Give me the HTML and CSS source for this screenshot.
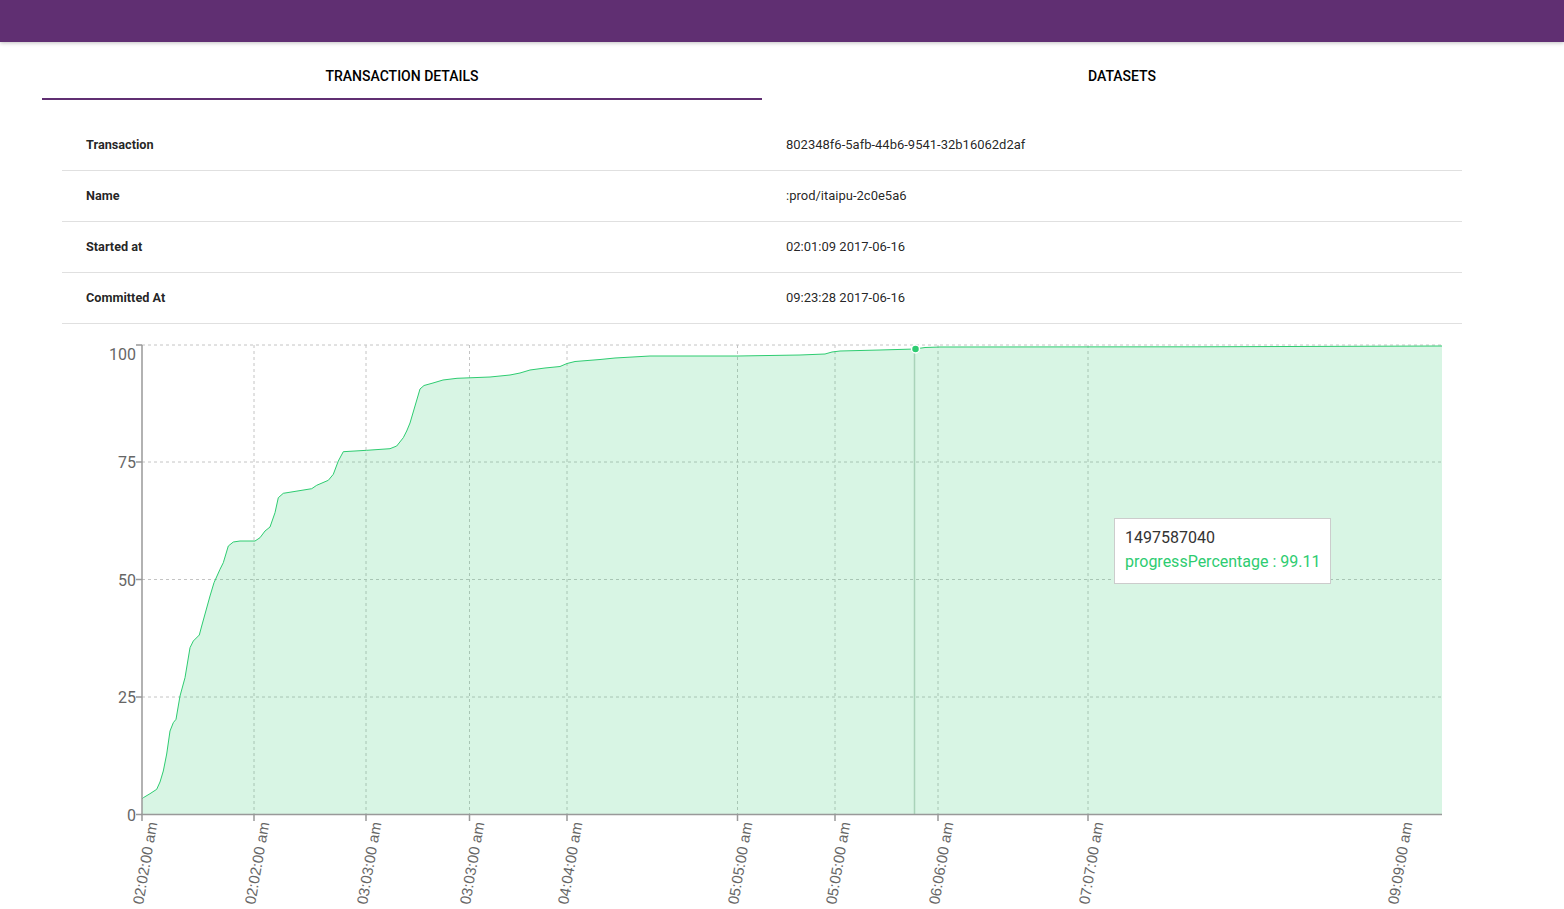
FILE: index.html
```html
<!DOCTYPE html>
<html lang="en">
<head>
<meta charset="utf-8">
<title>Transaction Details</title>
<link rel="stylesheet" href="styles.css">
</head>
<body>
<header class="appbar"></header>
<main class="content">
  <nav class="tabs">
    <div class="tab tab-active">TRANSACTION DETAILS</div>
    <div class="tab">DATASETS</div>
  </nav>
  <table class="details">
    <tbody>
      <tr><th>Transaction</th><td>802348f6-5afb-44b6-9541-32b16062d2af</td></tr>
      <tr><th>Name</th><td>:prod/itaipu-2c0e5a6</td></tr>
      <tr><th>Started at</th><td>02:01:09 2017-06-16</td></tr>
      <tr><th>Committed At</th><td>09:23:28 2017-06-16</td></tr>
    </tbody>
  </table>
  <div class="chart">
    <svg class="chart-svg" width="1440" height="586" viewBox="0 0 1440 586">
      <g transform="translate(-42,-323)">
        <g class="grid">
          <line x1="142" y1="344" x2="1442" y2="344"/>
          <line x1="142" y1="461" x2="1442" y2="461"/>
          <line x1="142" y1="578.5" x2="1442" y2="578.5"/>
          <line x1="142" y1="696" x2="1442" y2="696"/>
          <line x1="254" y1="344" x2="254" y2="813"/>
          <line x1="366" y1="344" x2="366" y2="813"/>
          <line x1="469.5" y1="344" x2="469.5" y2="813"/>
          <line x1="567" y1="344" x2="567" y2="813"/>
          <line x1="737.5" y1="344" x2="737.5" y2="813"/>
          <line x1="835" y1="344" x2="835" y2="813"/>
          <line x1="938" y1="344" x2="938" y2="813"/>
          <line x1="1088" y1="344" x2="1088" y2="813"/>
        </g>
        <path class="area" d="M142,798 L143.3,796.7 L150,792.7 L156.7,788.3 L160,781 L163.3,770 L166.7,753 L170,730 L173.3,721.7 L176,718.3 L180,695 L185,676.7 L190,646.7 L193.3,640 L199.3,634 L201.7,625 L210,595 L214,581.7 L220,568.3 L223.3,561.7 L228.3,545 L233.3,541 L240,540 L255,540 L260,536.7 L265,530 L270,526 L275,511.7 L278.3,496.7 L283.3,492.3 L311.7,487.7 L316.7,484.3 L328.3,479.3 L333.3,473.3 L338.3,460 L343.3,450.7 L366.7,449.3 L390,447.7 L396.7,445 L403.3,436.7 L406.7,430 L410,422 L415,405 L420,388 L424,384.5 L433,382 L443,379 L457,377.3 L490,376 L510,374 L520,372 L530,369 L545,367 L560,365.5 L567,362.5 L575,360.5 L600,358.5 L615,357 L650,355 L738,355 L800,354 L825,353 L832,351 L840,350 L880,349 L915,348 L925,346.5 L940,346 L1200,345.8 L1442,345 L1442,813 L142,813 Z"/>
        <path class="line" d="M142,798 L143.3,796.7 L150,792.7 L156.7,788.3 L160,781 L163.3,770 L166.7,753 L170,730 L173.3,721.7 L176,718.3 L180,695 L185,676.7 L190,646.7 L193.3,640 L199.3,634 L201.7,625 L210,595 L214,581.7 L220,568.3 L223.3,561.7 L228.3,545 L233.3,541 L240,540 L255,540 L260,536.7 L265,530 L270,526 L275,511.7 L278.3,496.7 L283.3,492.3 L311.7,487.7 L316.7,484.3 L328.3,479.3 L333.3,473.3 L338.3,460 L343.3,450.7 L366.7,449.3 L390,447.7 L396.7,445 L403.3,436.7 L406.7,430 L410,422 L415,405 L420,388 L424,384.5 L433,382 L443,379 L457,377.3 L490,376 L510,374 L520,372 L530,369 L545,367 L560,365.5 L567,362.5 L575,360.5 L600,358.5 L615,357 L650,355 L738,355 L800,354 L825,353 L832,351 L840,350 L880,349 L915,348 L925,346.5 L940,346 L1200,345.8 L1442,345"/>
        <line class="cursor" x1="914.5" y1="348" x2="914.5" y2="813"/>
        <circle class="dot" cx="915.5" cy="348" r="4"/>
        <g class="axis">
          <line x1="142" y1="344" x2="142" y2="813.5"/>
          <line x1="141" y1="813.5" x2="1442" y2="813.5"/>
          <line x1="136" y1="344" x2="142" y2="344"/>
          <line x1="136" y1="461" x2="142" y2="461"/>
          <line x1="136" y1="578.5" x2="142" y2="578.5"/>
          <line x1="136" y1="696" x2="142" y2="696"/>
          <line x1="136" y1="813.5" x2="142" y2="813.5"/>
          <line x1="142" y1="813" x2="142" y2="820"/>
          <line x1="254" y1="813" x2="254" y2="820"/>
          <line x1="366" y1="813" x2="366" y2="820"/>
          <line x1="469.5" y1="813" x2="469.5" y2="820"/>
          <line x1="567" y1="813" x2="567" y2="820"/>
          <line x1="737.5" y1="813" x2="737.5" y2="820"/>
          <line x1="835" y1="813" x2="835" y2="820"/>
          <line x1="938" y1="813" x2="938" y2="820"/>
          <line x1="1088" y1="813" x2="1088" y2="820"/>
        </g>
        <g class="ytick">
          <text x="136" y="353">100</text>
          <text x="136" y="461.5">75</text>
          <text x="136" y="579">50</text>
          <text x="136" y="696.5">25</text>
          <text x="136" y="814.5">0</text>
        </g>
        <g class="xtick">
          <text transform="translate(152,821) rotate(-80)">02:02:00 am</text>
          <text transform="translate(264,821) rotate(-80)">02:02:00 am</text>
          <text transform="translate(376,821) rotate(-80)">03:03:00 am</text>
          <text transform="translate(479,821) rotate(-80)">03:03:00 am</text>
          <text transform="translate(577,821) rotate(-80)">04:04:00 am</text>
          <text transform="translate(747,821) rotate(-80)">05:05:00 am</text>
          <text transform="translate(845,821) rotate(-80)">05:05:00 am</text>
          <text transform="translate(948,821) rotate(-80)">06:06:00 am</text>
          <text transform="translate(1098,821) rotate(-80)">07:07:00 am</text>
          <text transform="translate(1407,821) rotate(-80)">09:09:00 am</text>
        </g>
      </g>
    </svg>
    <div class="tooltip">
      <div class="tooltip-label">1497587040</div>
      <div class="tooltip-item">progressPercentage : 99.11</div>
    </div>
  </div>
</main>
</body>
</html>
```
FILE: styles.css
```css
* { box-sizing: border-box; }
html, body { margin: 0; padding: 0; background: #fff; }
body {
  font-family: Roboto, "Liberation Sans", Arial, sans-serif;
  color: rgba(0, 0, 0, 0.87);
  overflow: hidden;
}
.appbar {
  height: 42px;
  background: #602f72;
  box-shadow: 0 1px 4px rgba(0, 0, 0, 0.25);
  position: relative;
  z-index: 1;
}
.content {
  width: 1440px;
  margin-left: 42px;
}
.tabs {
  display: flex;
  margin-top: 10px;
  height: 48px;
}
.tab {
  flex: 1 1 0;
  display: flex;
  align-items: center;
  justify-content: center;
  font-size: 14px;
  font-weight: 500;
  color: #000;
  border-bottom: 2px solid transparent;
  padding-top: 2px;
}
.tab-active { border-bottom-color: #602f72; }
.details {
  margin: 19px 20px 0;
  width: 1400px;
  border-collapse: collapse;
  table-layout: fixed;
  font-size: 13px;
}
.details tr { height: 51px; border-bottom: 1px solid #e0e0e0; }
.details th, .details td {
  padding: 0 24px;
  text-align: left;
  vertical-align: middle;
}
.details th { font-weight: 700; color: rgba(0, 0, 0, 0.87); font-size: 12.7px; }
.details td { font-weight: 400; }
.chart {
  position: relative;
  height: 586px;
}
.chart-svg { display: block; }
.grid line { stroke: #c4c4c4; stroke-dasharray: 3 3; stroke-width: 1; }
.area { fill: #2ecc71; fill-opacity: 0.19; stroke: none; }
.line { fill: none; stroke: #2ecc71; stroke-width: 1; }
.cursor { stroke: #a9d3b9; stroke-width: 1.5; }
.dot { fill: #2ecc71; stroke: #fff; stroke-width: 1.5; }
.axis line { stroke: #999; stroke-width: 1.5; }
.ytick text {
  font-family: Roboto, "Liberation Sans", sans-serif;
  font-size: 16px;
  fill: #666;
  text-anchor: end;
  dominant-baseline: central;
}
.xtick text {
  font-family: "Liberation Sans", Arial, sans-serif;
  font-size: 15px;
  fill: #666;
  text-anchor: end;
  dominant-baseline: central;
}
.tooltip {
  position: absolute;
  left: 1072px;
  top: 194px;
  padding: 7px 10px 9px;
  background: #fff;
  border: 1px solid #ccc;
  font-size: 16px;
  line-height: 24px;
  white-space: nowrap;
}
.tooltip-label { color: #333; }
.tooltip-item { color: #2ecc71; }
```
